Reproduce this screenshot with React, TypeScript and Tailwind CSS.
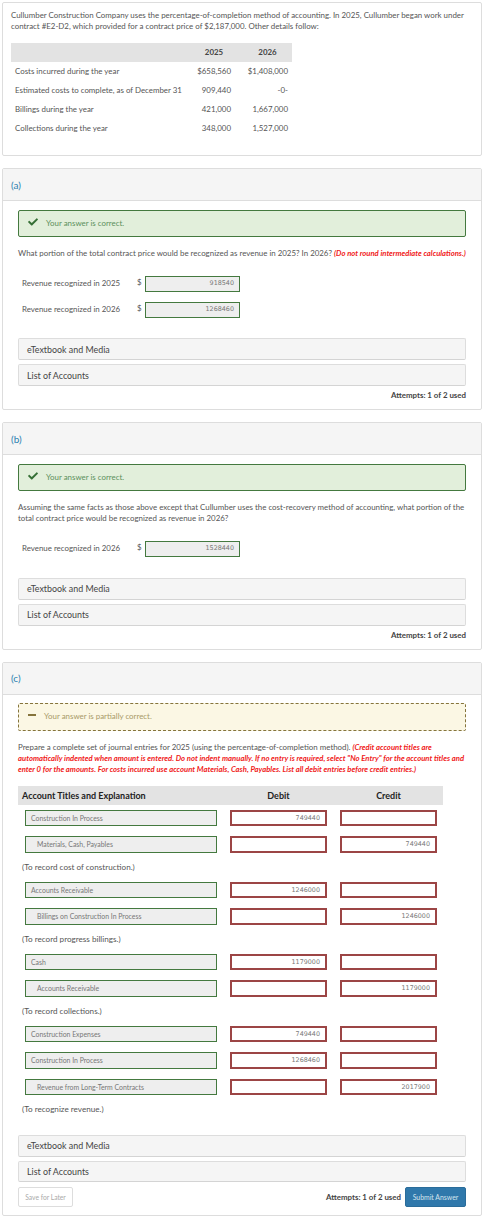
import { FaCheck } from "react-icons/fa";

const lato = "font-['Lato','Liberation_Sans',sans-serif]";

function Accordion({ label, h }: { label: string; h: string }) {
  return (
    <div className={`${h} flex items-center pl-[8px] bg-[#f5f5f5] border border-[#dddddd] border-b-[#d4d4d4] rounded-[2px] text-[8.9px] text-[#444444]`}>
      {label}
    </div>
  );
}

function Accordions({ compact = false }: { compact?: boolean }) {
  const h = compact ? "h-[21.5px]" : "h-[22px]";
  return (
    <div className="flex flex-col gap-[4px]">
      <Accordion label="eTextbook and Media" h={h} />
      <Accordion label="List of Accounts" h={h} />
    </div>
  );
}

function Correct() {
  return (
    <div className="h-[27.5px] flex items-center pl-[8.5px] gap-[8.5px] bg-[#e2efdb] border border-[#44793f] rounded-[2px] text-[7.9px] text-[#5c8f5c]">
      <FaCheck className="w-[10px] h-[10px] text-[#356f35] mb-[3px]" />
      <span className="mt-[0.5px]">Your answer is correct.</span>
    </div>
  );
}

function Amount({ label, value, className = "" }: { label: string; value: string; className?: string }) {
  return (
    <div className={`flex items-center pl-[4px] text-[7.9px] text-[#555555] ${className}`}>
      <span className="w-[115px] mb-[1px]">{label}</span>
      <span className="w-[8px] mb-[3px]">$</span>
      <div className="w-[95px] h-full flex items-center justify-end pr-[5px] bg-[#eeeeee] border border-[#44793f] font-['DejaVu_Sans',sans-serif] text-[6.4px] text-[#777777]">
        {value}
      </div>
    </div>
  );
}

function Attempts() {
  return <div className="mt-[4px] h-[11px] flex items-center justify-end text-[7.9px] font-bold text-[#444444]">Attempts: 1 of 2 used</div>;
}

function SectionHead({ label }: { label: string }) {
  return (
    <div className="h-[32px] flex items-center pl-[8px] pt-[1px] bg-[#f5f5f5] border-b border-[#dddddd] text-[10px] text-[#2a7fb0]">
      {label}
    </div>
  );
}

function Card({ className = "", children }: { className?: string; children: React.ReactNode }) {
  return <section className={`ml-[2px] w-[480px] bg-white border border-[#dddddd] rounded-[2px] ${className}`}>{children}</section>;
}

type Row = { account: string; debit?: string; credit?: string; indent?: boolean; tall?: boolean };

function Money({ value, className = "" }: { value?: string; className?: string }) {
  return (
    <div className={`w-[97px] flex items-center justify-end pr-[5px] bg-white border-2 border-[#9c4545] font-['DejaVu_Sans',sans-serif] text-[6.4px] text-[#777777] ${className}`}>
      {value}
    </div>
  );
}

function Entry({ rows, note }: { rows: Row[]; note: string }) {
  return (
    <div>
      <div className="flex flex-col gap-[10px]">
        {rows.map((r, i) => (
          <div key={i} className={`flex pl-[7px] ${r.tall ? "h-[17px]" : "h-[16px]"}`}>
            <div className={`w-[192px] flex items-center bg-[#eeeeee] border border-[#44793f] text-[6.9px] text-[#777777] ${r.indent ? "pl-[11px]" : "pl-[5px]"}`}>
              {r.account}
            </div>
            <Money value={r.debit} className="ml-[13px]" />
            <Money value={r.credit} className="ml-[13px]" />
          </div>
        ))}
      </div>
      <div className="h-[29px] flex items-center pl-[4px] text-[8.15px] text-[#555555]">{note}</div>
    </div>
  );
}

export default function App() {
  return (
    <div className={`${lato} w-[486px] h-[1220px] bg-white pt-[1.5px] leading-[11px]`}>
      <Card className="h-[154.5px] pl-[8px] pt-[7px] text-[7.9px] text-[#555555]">
        <p className="whitespace-nowrap">
          Cullumber Construction Company uses the percentage-of-completion method of accounting. In 2025, Cullumber began work under
          <br />
          contract #E2-D2, which provided for a contract price of $2,187,000. Other details follow:
        </p>
        <div className="mt-[11.5px] w-[281px] grid grid-cols-[182px_42px_57px] auto-rows-[19px]">
          <div className="bg-[#e3e3e3]" />
          <div className="bg-[#e3e3e3] flex items-center justify-center font-bold text-[#444444]">2025</div>
          <div className="bg-[#e3e3e3] flex items-center justify-center pl-[8px] font-bold text-[#444444]">2026</div>
          {[
            ["Costs incurred during the year", "$658,560", "$1,408,000"],
            ["Estimated costs to complete, as of December 31", "909,440", "-0-"],
            ["Billings during the year", "421,000", "1,667,000"],
            ["Collections during the year", "348,000", "1,527,000"],
          ].map(([a, b, c]) => (
            <div key={a} className="contents">
              <div className="flex items-center pl-[4px] whitespace-nowrap">{a}</div>
              <div className="flex items-center justify-end pr-[4px]">{b}</div>
              <div className="flex items-center justify-end pr-[4px]">{c}</div>
            </div>
          ))}
        </div>
      </Card>

      <Card className="mt-[12px] h-[242px]">
        <SectionHead label="(a)" />
        <div className="px-[15px] pt-[8.5px]">
          <Correct />
          <p className="mt-[11px] text-[7.9px] text-[#555555] whitespace-nowrap">
            What portion of the total contract price would be recognized as revenue in 2025? In 2026?{" "}
            <span className="font-bold italic text-[7.67px] text-[#f02020]">(Do not round intermediate calculations.)</span>
          </p>
          <Amount label="Revenue recognized in 2025" value="918540" className="mt-[16.5px] h-[16px]" />
          <Amount label="Revenue recognized in 2026" value="1268460" className="mt-[10px] h-[16.7px]" />
          <div className="mt-[20.3px]"><Accordions /></div>
          <Attempts />
        </div>
      </Card>

      <Card className="mt-[12px] h-[227.5px]">
        <SectionHead label="(b)" />
        <div className="px-[15px] pt-[8.5px]">
          <Correct />
          <p className="mt-[11px] text-[7.9px] text-[#555555] whitespace-nowrap">
            Assuming the same facts as those above except that Cullumber uses the cost-recovery method of accounting, what portion of the
            <br />
            total contract price would be recognized as revenue in 2026?
          </p>
          <Amount label="Revenue recognized in 2026" value="1528440" className="mt-[16.5px] h-[16px]" />
          <div className="mt-[21px]"><Accordions /></div>
          <Attempts />
        </div>
      </Card>

      <Card className="mt-[12px] h-[554px]">
        <SectionHead label="(c)" />
        <div className="px-[15px] pt-[8.5px]">
          <div className="h-[27.5px] flex items-center pl-[9px] bg-[#fbf7e4] border border-dashed border-[#85743c] rounded-[2px] text-[7.9px] text-[#a89a68]">
            <span className="w-[8px] h-[2px] bg-[#85743c] mb-[3px]" />
            <span className="ml-[8px]">Your answer is partially correct.</span>
          </div>
          <p className="mt-[11px] text-[7.9px] text-[#555555] whitespace-nowrap">
            Prepare a complete set of journal entries for 2025 (using the percentage-of-completion method).{" "}
            <span className="font-bold italic text-[7.7px] text-[#f02020]">
              (Credit account titles are
              <br />
              automatically indented when amount is entered. Do not indent manually. If no entry is required, select "No Entry" for the account titles and
              <br />
              enter 0 for the amounts. For costs incurred use account Materials, Cash, Payables. List all debit entries before credit entries.)
            </span>
          </p>
          <div className="mt-[11.5px] h-[19px] w-[425px] bg-[#e3e3e3] flex items-center font-bold text-[9px] text-[#222222]">
            <span className="w-[212px] pl-[4px]">Account Titles and Explanation</span>
            <span className="w-[97px] text-center">Debit</span>
            <span className="w-[97px] ml-[13px] text-center">Credit</span>
          </div>
          <div className="mt-[5px]">
            <Entry
              note="(To record cost of construction.)"
              rows={[
                { account: "Construction In Process", debit: "749440" },
                { account: "Materials, Cash, Payables", credit: "749440", indent: true, tall: true },
              ]}
            />
            <Entry
              note="(To record progress billings.)"
              rows={[
                { account: "Accounts Receivable", debit: "1246000" },
                { account: "Billings on Construction In Process", credit: "1246000", indent: true, tall: true },
              ]}
            />
            <Entry
              note="(To record collections.)"
              rows={[
                { account: "Cash", debit: "1179000" },
                { account: "Accounts Receivable", credit: "1179000", indent: true, tall: true },
              ]}
            />
            <Entry
              note="(To recognize revenue.)"
              rows={[
                { account: "Construction Expenses", debit: "749440" },
                { account: "Construction In Process", debit: "1268460", tall: true },
                { account: "Revenue from Long-Term Contracts", credit: "2017900", indent: true },
              ]}
            />
          </div>
          <div className="mt-[11px]"><Accordions compact /></div>
          <div className="mt-[5px] flex items-center">
            <button className="w-[55px] h-[20px] bg-white border border-[#dddddd] rounded-[2px] text-[6.7px] text-[#aaaaaa]">Save for Later</button>
            <span className="ml-auto text-[7.9px] font-bold text-[#444444]">Attempts: 1 of 2 used</span>
            <button className="ml-[4px] w-[61px] h-[20px] bg-[#2f78ab] border border-[#2a6c9a] rounded-[2px] text-[6.9px] text-[#d5e4ee]">Submit Answer</button>
          </div>
        </div>
      </Card>
    </div>
  );
}
